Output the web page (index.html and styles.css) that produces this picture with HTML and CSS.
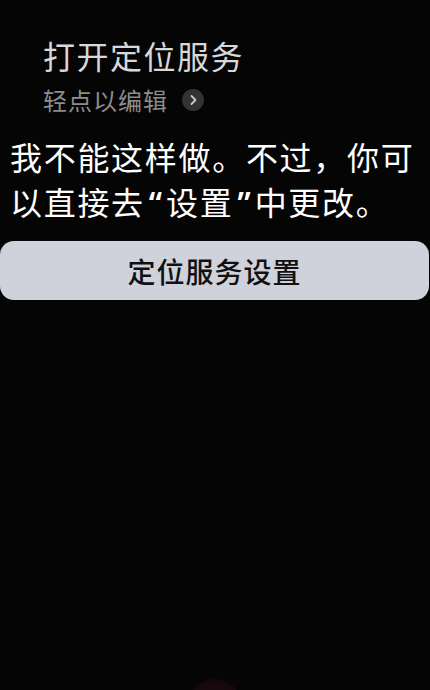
FILE: index.html
```html
<!DOCTYPE html>
<html lang="zh-CN">
<head>
<meta charset="utf-8">
<link rel="stylesheet" href="styles.css">
</head>
<body>
<div class="screen">
  <div class="query">
    <div class="query-title">打开定位服务</div>
    <div class="query-edit">
      <span>轻点以编辑</span>
      <span class="chev">
        <svg width="22" height="22" viewBox="0 0 22 22"><path d="M9.5 7l4 4-4 4" fill="none" stroke="#c8c8c8" stroke-width="1.8" stroke-linecap="round" stroke-linejoin="round"/></svg>
      </span>
    </div>
  </div>
  <div class="answer">我不能这样做。不过，你可<br>以直接去<span class="q">“</span>设置<span class="q">”</span>中更改。</div>
  <button class="action">定位服务设置</button>
  <div class="orb"></div>
</div>
</body>
</html>
```
FILE: styles.css
```css
html, body {
  margin: 0;
  padding: 0;
  background: #050505;
}
.screen {
  position: relative;
  width: 430px;
  height: 690px;
  overflow: hidden;
  font-family: "Noto Sans CJK SC", "Noto Sans", sans-serif;
}
.query {
  padding: 33px 0 0 43px;
}
.query-title {
  font-size: 32px;
  line-height: 44px;
  color: #d8d8d8;
  letter-spacing: 1.5px;
}
.query-edit {
  display: flex;
  align-items: center;
  gap: 14px;
  margin-top: 6px;
  font-size: 24px;
  line-height: 34px;
  color: #8c8c8c;
  letter-spacing: 1px;
}
.chev {
  display: flex;
  width: 22px;
  height: 22px;
  border-radius: 50%;
  background: #333335;
}
.answer {
  margin: 17px 10px 0 10px;
  font-size: 32px;
  line-height: 45px;
  color: #ffffff;
  letter-spacing: 1.7px;
}
.q {
  display: inline-block;
  line-height: 32px;
  font-family: "Noto Sans", "DejaVu Sans", sans-serif;
  font-weight: 600;
  letter-spacing: 0;
  margin: 0 4px;
}
.action {
  display: block;
  margin: 17px 1px 0 0;
  width: 429px;
  height: 59px;
  border: none;
  border-radius: 14px;
  background: #cfd2da;
  color: #111111;
  font-family: "Noto Sans CJK SC", "Noto Sans", sans-serif;
  font-size: 28px;
  font-weight: 500;
  letter-spacing: 1px;
  padding: 0;
}
.orb {
  position: absolute;
  left: 189px;
  top: 679px;
  width: 52px;
  height: 52px;
  border-radius: 50%;
  background: radial-gradient(circle at 50% 40%, #1c0c10, #12070a 70%, #0a0406);
}
```
